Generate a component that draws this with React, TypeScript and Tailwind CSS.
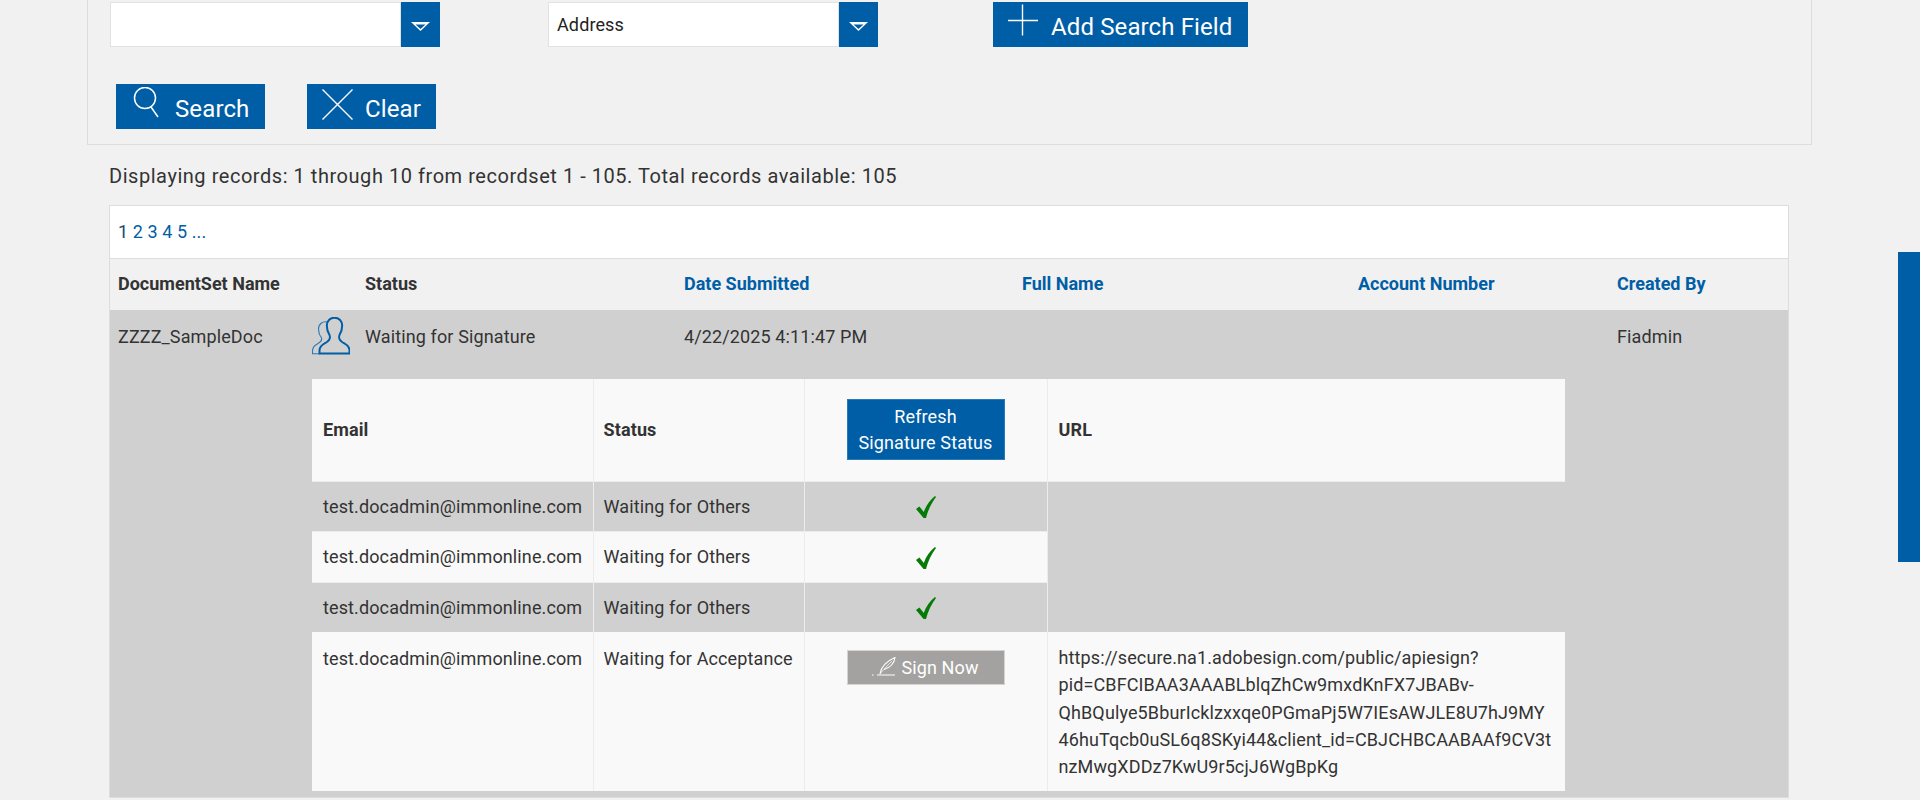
import React from "react";

const Arrow = () => (
  <svg width="19" height="9" viewBox="0 0 19 9" fill="none" className="mt-[3px]">
    <path d="M0 0H19L9.5 9Z" fill="#ffffff" />
    <path d="M4.5 2.5H14.5L9.5 7Z" fill="#005ea6" />
  </svg>
);

const SelectBox = ({ value, className }: { value?: string; className?: string }) => (
  <div className={"flex h-[45px] w-[330px] " + (className ?? "")}>
    <div className="flex flex-1 items-center border border-[#e2e2e2] bg-white pl-[8px] text-[18px] text-[#222]">{value}</div>
    <div className="flex w-[39px] items-center justify-center bg-[#005ea6]">
      <Arrow />
    </div>
  </div>
);

const Check = () => (
  <svg width="20" height="22" viewBox="0 0 20 22" className="mx-auto mt-[2px] block">
    <path d="M0 13L3.4 10.5L7.8 16C10 9.5 14 4 19 0L20 1C15.5 7 12 14 10 22L7.6 22Z" fill="#057a05" />
  </svg>
);

const People = () => (
  <svg width="38" height="38" viewBox="0 0 38 38" fill="none">
    <path d="M15.5 5C10.5 4 6.5 7 6.5 12C6.5 15 8 19 9.5 21C10 23 9 25 6 26.5C3 28 0.5 30 0.5 34V36.8H8" stroke="#2a78b4" strokeWidth="1.1" />
    <path d="M22.5 0.8C18 0.8 14.8 4 14.8 8.5C14.8 12 16 15.5 17.5 18C18.5 20.5 17.5 23.5 15 25C12 27 8 28 7.5 33V36.5H37.5V33C37 28 33 27 30 25C27.5 23.5 26.5 20.5 27.5 18C29 15.5 30.2 12 30.2 8.5C30.2 4 27 0.8 22.5 0.8Z" stroke="#005ea6" strokeWidth="2" />
  </svg>
);

const Feather = () => (
  <svg width="24" height="19" viewBox="0 0 24 19" fill="none" className="mr-[5px] -mt-[3px]">
    <path d="M8 17C9 10 15 4 23 0.5C22.5 6 18 11 12 12.5" stroke="#ffffff" strokeWidth="1.1" />
    <path d="M8 17C12 12 16 8 20 4" stroke="#ffffff" strokeWidth="0.7" />
    <path d="M0 18H1.5M5 18H23" stroke="#ffffff" strokeWidth="1" />
  </svg>
);

const BlueButton = ({ width, icon, label, gap }: { width: string; icon: React.ReactNode; label: string; gap: string }) => (
  <button className={"relative flex h-[45px] items-center bg-[#005ea6] text-[24px] text-white " + width}>
    {icon}
    <span className={gap}>{label}</span>
  </button>
);

const rows = [
  { email: "test.docadmin@immonline.com", status: "Waiting for Others", gray: true, h: "h-[50px]" },
  { email: "test.docadmin@immonline.com", status: "Waiting for Others", gray: false, h: "h-[51px]" },
  { email: "test.docadmin@immonline.com", status: "Waiting for Others", gray: true, h: "h-[50px]" },
];

const tdBase = "px-[11px] align-middle";
const tdStatus = "pl-[10px] pr-0 align-middle whitespace-nowrap";

export default function App() {
  return (
    <div className="relative h-[800px] w-[1920px] overflow-hidden bg-[#f1f1f1] font-['Roboto',sans-serif] text-[18px] tracking-[0.12px] text-[#333]">
      <div className="ml-[87px] h-[145px] w-[1725px] border-x border-b border-[#dddddd] pt-[2px]">
        <div className="flex items-start pl-[22px]">
          <SelectBox />
          <SelectBox value="Address" className="ml-[108px]" />
          <button className="ml-[115px] flex h-[45px] w-[255px] items-center bg-[#005ea6] pl-[15px] text-[24px] text-white">
            <svg width="30" height="32" viewBox="0 0 30 32" fill="none" className="-mt-[10px]">
              <path d="M0 16.5H30M14.5 0.5V31.5" stroke="#ffffff" strokeWidth="1.4" />
            </svg>
            <span className="ml-[13px] mt-[5px]">Add Search Field</span>
          </button>
        </div>
        <div className="mt-[37px] flex pl-[28px]">
          <BlueButton
            width="w-[149px] pl-[17px]"
            gap="ml-[14px] mt-[5px]"
            label="Search"
            icon={
              <svg width="28" height="32" viewBox="0 0 28 32" fill="none" className="-mt-[7px]">
                <circle cx="12" cy="11" r="10.5" stroke="#ffffff" strokeWidth="1.5" />
                <path d="M18 20L25 30" stroke="#ffffff" strokeWidth="1.5" />
              </svg>
            }
          />
          <BlueButton
            width="ml-[42px] w-[129px] pl-[15px]"
            gap="ml-[12px] mt-[5px]"
            label="Clear"
            icon={
              <svg width="31" height="31" viewBox="0 0 31 31" fill="none" className="-mt-[5px]">
                <path d="M0.5 0.5L30.5 30.5M30.5 0.5L0.5 30.5" stroke="#ffffff" strokeWidth="1.4" />
              </svg>
            }
          />
        </div>
      </div>

      <div className="ml-[109px] flex h-[60px] items-center pt-[1px] text-[20px] tracking-[0.54px] text-[#333]">
        Displaying records: 1 through 10 from recordset 1 - 105. Total records available: 105
      </div>

      <div className="ml-[109px] w-[1680px] border border-[#dddddd]">
        <div className="flex h-[53px] items-center border-b border-[#dddddd] bg-white pb-[2px] pl-[8px] text-[18px] text-[#005ea6]">
          <span className="text-[#1b4a70]">1</span>
          <span className="ml-[4.5px]">2</span>
          <span className="ml-[4.5px]">3</span>
          <span className="ml-[4.5px]">4</span>
          <span className="ml-[4.5px]">5</span>
          <span className="ml-[4.5px]">...</span>
        </div>
        <div className="grid h-[51px] grid-cols-[247px_319px_338px_336px_259px_1fr] items-center bg-[#f1f1f1] pb-[2px] text-[18px] font-bold tracking-normal">
          <div className="pl-[8px]">DocumentSet Name</div>
          <div className="pl-[8px]">Status</div>
          <div className="pl-[8px] text-[#005ea6]">Date Submitted</div>
          <div className="pl-[8px] text-[#005ea6]">Full Name</div>
          <div className="pl-[8px] text-[#005ea6]">Account Number</div>
          <div className="pl-[8px] text-[#005ea6]">Created By</div>
        </div>
        <div className="bg-[#d0d0d0] pb-[6px]">
          <div className="grid h-[69px] grid-cols-[247px_319px_338px_336px_259px_1fr] items-start">
            <div className="flex items-start pl-[8px]">
              <span className="mt-[13px]">ZZZZ_SampleDoc</span>
              <span className="ml-auto mr-[7px] mt-[7px]">
                <People />
              </span>
            </div>
            <div className="mt-[13px] pl-[8px]">Waiting for Signature</div>
            <div className="mt-[13px] pl-[8px]">4/22/2025 4:11:47 PM</div>
            <div></div>
            <div></div>
            <div className="mt-[13px] pl-[8px]">Fiadmin</div>
          </div>
          <table className="ml-[202px] w-[1253px] table-fixed border-collapse text-[18px]">
            <colgroup>
              <col className="w-[281px]" />
              <col className="w-[211px]" />
              <col className="w-[243px]" />
              <col className="w-[518px]" />
            </colgroup>
            <tbody>
              <tr className="h-[102px] bg-[#f9f9f9] font-bold">
                <td className={tdBase + " border-r border-[#ececec]"}>Email</td>
                <td className={tdStatus + " border-r border-[#ececec]"}>Status</td>
                <td className="border-r border-[#ececec] align-middle">
                  <button className="mx-auto block h-[61px] w-[158px] border border-[#2a78b4] bg-[#005ea6] text-[18px] font-normal leading-[26px] text-white">
                    Refresh
                    <br />
                    Signature Status
                  </button>
                </td>
                <td className={tdBase}>URL</td>
              </tr>
              {rows.map((r, i) => (
                <tr key={i} className={r.h + " border-t border-[#ececec] " + (r.gray ? "bg-[#d0d0d0]" : "bg-[#f9f9f9]")}>
                  <td className={tdBase + " border-r border-[#ececec]"}>{r.email}</td>
                  <td className={tdStatus + " border-r border-[#ececec]"}>{r.status}</td>
                  <td className="border-r border-[#ececec] align-middle">
                    <Check />
                  </td>
                  {i === 0 && <td rowSpan={3} className="bg-[#d0d0d0]"></td>}
                </tr>
              ))}
              <tr className="h-[159px] bg-[#f9f9f9]">
                <td className={tdBase + " border-r border-[#ececec] pt-[13px] align-top"}>test.docadmin@immonline.com</td>
                <td className="border-r border-[#ececec] pl-[10px] pr-0 pt-[13px] align-top whitespace-nowrap">Waiting for Acceptance</td>
                <td className="border-r border-[#ececec] pt-[18px] align-top">
                  <button className="mx-auto flex h-[35px] w-[158px] items-center justify-center border border-[#d4d4d4] bg-[#a3a2a0] text-[18px] text-white">
                    <Feather />
                    Sign Now
                  </button>
                </td>
                <td className="px-[11px] pt-[12px] align-top leading-[27.3px] [overflow-wrap:anywhere]">
                  https://secure.na1.adobesign.com/public/apiesign?pid=CBFCIBAA3AAABLblqZhCw9mxdKnFX7JBABv-QhBQulye5BburIcklzxxqe0PGmaPj5W7IEsAWJLE8U7hJ9MY46huTqcb0uSL6q8SKyi44&client_id=CBJCHBCAABAAf9CV3tnzMwgXDDz7KwU9r5cjJ6WgBpKg
                </td>
              </tr>
            </tbody>
          </table>
        </div>
      </div>

      <div className="absolute right-0 top-[252px] h-[310px] w-[22px] bg-[#005ea6]"></div>
    </div>
  );
}
